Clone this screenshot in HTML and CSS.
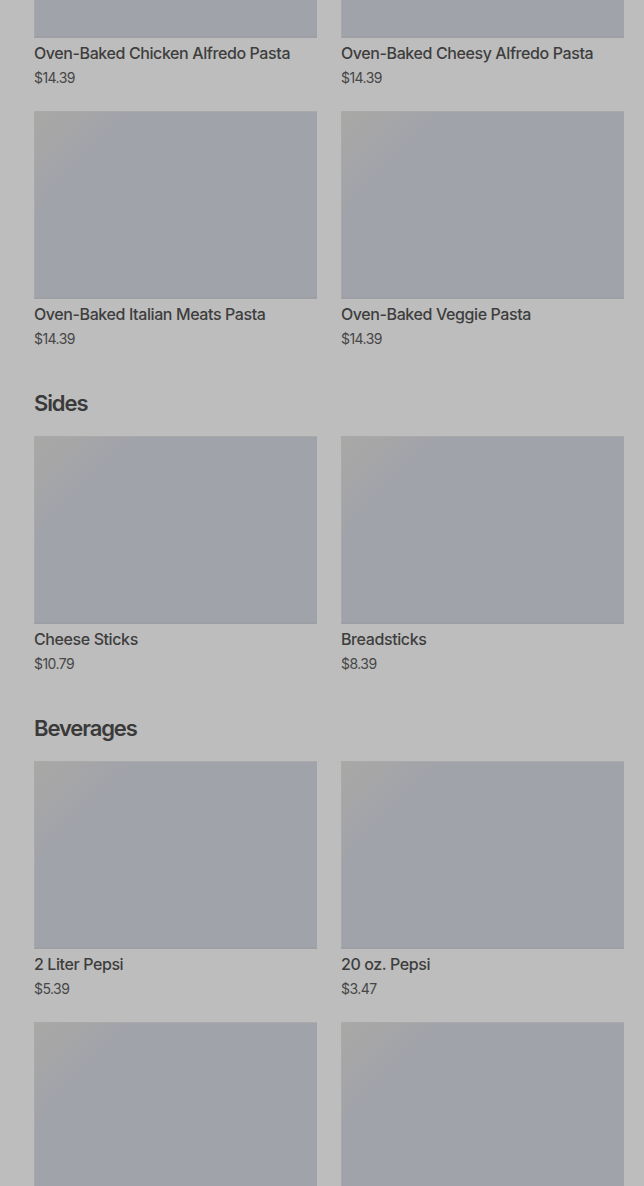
FILE: index.html
```html
<!DOCTYPE html>
<html lang="en">
<head>
<meta charset="utf-8">
<title>Menu</title>
<link rel="stylesheet" href="styles.css">
</head>
<body>
<main class="menu">
  <section class="section section-first">
    <div class="grid">
      <div class="card">
        <div class="thumb"></div>
        <div class="name">Oven-Baked Chicken Alfredo Pasta</div>
        <div class="price">$14.39</div>
      </div>
      <div class="card">
        <div class="thumb"></div>
        <div class="name">Oven-Baked Cheesy Alfredo Pasta</div>
        <div class="price">$14.39</div>
      </div>
      <div class="card">
        <div class="thumb"></div>
        <div class="name">Oven-Baked Italian Meats Pasta</div>
        <div class="price">$14.39</div>
      </div>
      <div class="card">
        <div class="thumb"></div>
        <div class="name">Oven-Baked Veggie Pasta</div>
        <div class="price">$14.39</div>
      </div>
    </div>
  </section>

  <section class="section">
    <h2 class="section-title">Sides</h2>
    <div class="grid">
      <div class="card">
        <div class="thumb"></div>
        <div class="name">Cheese Sticks</div>
        <div class="price">$10.79</div>
      </div>
      <div class="card">
        <div class="thumb"></div>
        <div class="name">Breadsticks</div>
        <div class="price">$8.39</div>
      </div>
    </div>
  </section>

  <section class="section">
    <h2 class="section-title">Beverages</h2>
    <div class="grid">
      <div class="card">
        <div class="thumb"></div>
        <div class="name">2 Liter Pepsi</div>
        <div class="price">$5.39</div>
      </div>
      <div class="card">
        <div class="thumb"></div>
        <div class="name">20 oz. Pepsi</div>
        <div class="price">$3.47</div>
      </div>
      <div class="card">
        <div class="thumb"></div>
      </div>
      <div class="card">
        <div class="thumb"></div>
      </div>
    </div>
  </section>
</main>
</body>
</html>
```

FILE: styles.css
```css
html, body {
  margin: 0;
  padding: 0;
  background: #bdbdbd;
  overflow: hidden;
}

body {
  font-family: Inter, "Noto Sans", "Liberation Sans", sans-serif;
  color: #404040;
}

.menu {
  padding: 0 20px 0 34px;
  margin-top: -150px;
}

.section + .section {
  margin-top: 40px;
}

.section-title {
  margin: 0 0 19px;
  font-size: 22px;
  line-height: 28px;
  font-weight: 600;
  letter-spacing: -0.05em;
  color: #3a3a3a;
}

.grid {
  display: grid;
  grid-template-columns: 1fr 1fr;
  column-gap: 24px;
  row-gap: 23px;
}

.thumb {
  height: 188px;
  box-sizing: border-box;
  background: linear-gradient(135deg, #a8a8a6 0%, #a6a6a7 9%, #a1a3aa 22%, #a1a3aa 100%);
  border-top: 1px solid #a9a9a9;
  border-left: 1px solid #a9a9a9;
  border-bottom: 2px solid #9d9fa5;
}

.name {
  margin-top: 3px;
  font-size: 16px;
  line-height: 24px;
  font-weight: 500;
  color: #3e3e3e;
  letter-spacing: -0.4px;
}

.price {
  margin-top: 3px;
  font-size: 14px;
  line-height: 20px;
  font-weight: 400;
  color: #474747;
  letter-spacing: -0.04em;
}
```
